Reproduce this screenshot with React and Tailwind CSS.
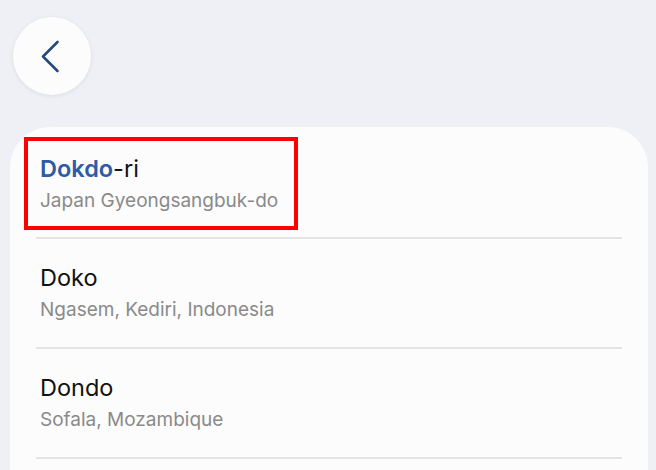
export default function App() {
  const rows = [
    { title: "Doko", sub: "Ngasem, Kediri, Indonesia" },
    { title: "Dondo", sub: "Sofala, Mozambique" },
  ];
  return (
    <div
      className="w-[656px] h-[470px] overflow-hidden bg-[#eff0f5] flex flex-col"
      style={{ fontFamily: "Inter, Roboto, 'Noto Sans', sans-serif" }}
    >
      <div className="pt-[17px] pl-[13px]">
        <button className="w-[78px] h-[78px] rounded-full bg-[#fcfcfc] shadow-[0_1px_4px_rgba(0,0,0,0.08)] flex items-center justify-center">
          <svg width="78" height="78" viewBox="0 0 78 78" fill="none">
            <polyline
              points="44.5,25 30,39.5 44.5,54"
              stroke="#274a7c"
              strokeWidth="2.6"
              strokeLinecap="round"
              strokeLinejoin="round"
            />
          </svg>
        </button>
      </div>
      <div className="mt-[32px] ml-[10px] mr-[8px] flex-1 rounded-t-[40px] bg-[#fcfcfc] flex flex-col">
        <div className="pt-[10px] pl-[14px]">
          <div className="w-[274px] border-[4px] border-[#ff0000] pl-[12px] pt-[13.5px] pb-[13.5px]">
            <div className="text-[23.5px] leading-[28px] text-[#111]">
              <span className="font-semibold text-[#2d5ba6]">Dokdo</span>-ri
            </div>
            <div className="mt-[6px] text-[19px] leading-[24px] text-[#8a8a8a]">
              Japan Gyeongsangbuk-do
            </div>
          </div>
        </div>
        <div className="mt-[7px] mx-[26px] h-[2px] bg-[#e4e4e7]" />
        {rows.map((r) => (
          <div key={r.title} className="flex flex-col">
            <div className="pl-[30px] pt-[25px] pb-[25px]">
              <div className="text-[23.5px] leading-[28px] text-[#111]">{r.title}</div>
              <div className="mt-[6px] text-[19px] leading-[24px] text-[#8a8a8a]">{r.sub}</div>
            </div>
            <div className="mx-[26px] h-[2px] bg-[#e4e4e7]" />
          </div>
        ))}
      </div>
    </div>
  );
}
